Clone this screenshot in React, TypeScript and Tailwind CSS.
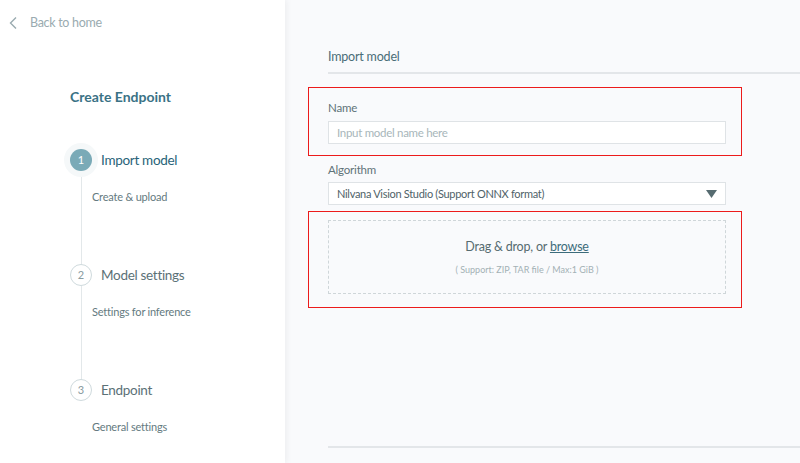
import React from "react";

const font = { fontFamily: "Lato, 'Noto Sans', sans-serif" };

function Step({
  num,
  title,
  sub,
  active,
  last,
}: {
  num: number;
  title: string;
  sub: string;
  active?: boolean;
  last?: boolean;
}) {
  return (
    <div className="relative h-[115px]">
      {!last && (
        <div className="absolute left-[10.5px] top-[22px] h-[104px] w-px bg-[#e3e8ea]" />
      )}
      <div className="flex items-center h-[23px]">
        <div
          className={
            active
              ? "w-[22px] h-[22px] rounded-full bg-[#7aaab7] text-white text-[11px] flex items-center justify-center shadow-[0_0_0_6px_#f5f8f9] relative"
              : "w-[22px] h-[22px] rounded-full border border-[#cfdadd] bg-white text-[#8a9ca1] text-[11px] flex items-center justify-center relative"
          }
        >
          {num}
        </div>
        <span
          className={
            active
              ? "ml-[9px] text-[13.5px] tracking-[-0.3px] text-[#286378]"
              : "ml-[9px] text-[13.5px] tracking-[-0.3px] text-[#5b7177]"
          }
        >
          {title}
        </span>
      </div>
      <div className="ml-[22px] mt-[17px] text-[11px] tracking-[-0.2px] text-[#647a80]">
        {sub}
      </div>
    </div>
  );
}

export default function App() {
  return (
    <div className="flex w-[800px] h-[463px] overflow-hidden bg-[#f9fafc]" style={font}>
      {/* sidebar */}
      <aside className="w-[285px] shrink-0 bg-white relative shadow-[2px_0_6px_rgba(0,0,0,0.05)]">
        <div className="flex items-center pl-[8px] pt-[14px]">
          <svg width="10" height="14" viewBox="0 0 10 14" fill="none">
            <path d="M8 1.5L2.5 7L8 12.5" stroke="#9aabb0" strokeWidth="1.4" />
          </svg>
          <span className="ml-[12px] text-[12.5px] tracking-[-0.3px] text-[#9aabb0]">
            Back to home
          </span>
        </div>
        <div className="pl-[70px] mt-[53px]">
          <h1 className="text-[14px] font-bold text-[#3a7285]">Create Endpoint</h1>
        </div>
        <div className="pl-[70px] mt-[42px]">
          <Step num={1} title="Import model" sub="Create & upload" active />
          <Step num={2} title="Model settings" sub="Settings for inference" />
          <Step num={3} title="Endpoint" sub="General settings" last />
        </div>
      </aside>

      {/* main */}
      <main className="flex-1 pl-[43px] pt-[48px]">
        <div className="border-b-2 border-[#e3e6e9] pb-[5px]">
          <h2 className="text-[12.5px] tracking-[-0.2px] text-[#4a6d78]">Import model</h2>
        </div>

        <div className="-ml-[20px] w-[434px] mt-[13px] border border-[#ec1b1b] pl-[19px] pr-[15px] pt-[11px] pb-[11px]">
          <label className="block text-[11.5px] tracking-[-0.2px] text-[#5f7378]">Name</label>
          <div className="mt-[5px] h-[23px] bg-white border border-[#dfe3e6] flex items-center px-[8px] text-[11.5px] tracking-[-0.3px] text-[#a8b6ba]">
            Input model name here
          </div>
        </div>

        <div className="w-[398px] mt-[5px]">
          <label className="block text-[11.5px] tracking-[-0.2px] text-[#5f7378]">Algorithm</label>
          <div className="mt-[4px] h-[23px] bg-white border border-[#dfe3e6] flex items-center justify-between px-[8px] text-[11px] tracking-[-0.3px] text-[#4f6268]">
            <span>Nilvana Vision Studio (Support ONNX format)</span>
            <svg width="11" height="8" viewBox="0 0 11 8">
              <path d="M0 0H11L5.5 8Z" fill="#566b70" />
            </svg>
          </div>
        </div>

        <div className="-ml-[20px] w-[434px] mt-[6px] border border-[#ec1b1b] pl-[19px] pr-[15px] pt-[8px] pb-[13px]">
          <div className="h-[74px] border border-dashed border-[#cfd6d9] flex flex-col items-center justify-center">
            <div className="text-[12.5px] tracking-[-0.2px] text-[#566b70]">
              Drag &amp; drop, or{" "}
              <span className="underline text-[#3c6c7b]">browse</span>
            </div>
            <div className="mt-[6px] text-[9px] text-[#a3b1b5]">
              ( Support: ZIP, TAR file / Max:1 GiB )
            </div>
          </div>
        </div>

        <div className="mt-[138px] border-t-2 border-[#e3e6e9]" />
      </main>
    </div>
  );
}
